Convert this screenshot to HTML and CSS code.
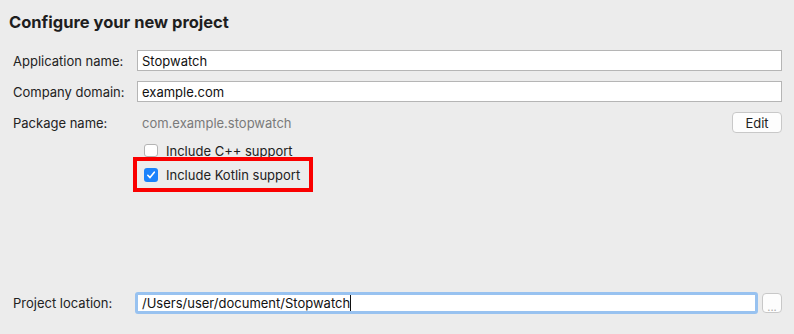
FILE: index.html
```html
<!DOCTYPE html>
<html>
<head>
    <meta name="viewport" content="width=device-width, initial-scale=1">
    <link rel="stylesheet" href="styles.css">
</head>
<body>
    <div class="wizard">
        <h1>Configure your new project</h1>
        <div class="form">
            <label class="label" for="appName">Application name:</label>
            <input type="text" id="appName" class="field" value="Stopwatch">

            <label class="label" for="domain">Company domain:</label>
            <input type="text" id="domain" class="field" value="example.com">

            <span class="label">Package name:</span>
            <div class="package">
                <span class="package-value">com.example.stopwatch</span>
                <button class="btn">Edit</button>
            </div>
        </div>

        <div class="options">
            <label class="option plain">
                <span class="check"></span>
                Include C++ support
            </label>
            <div class="highlight">
                <label class="option">
                    <span class="check checked">
                        <svg width="10" height="10" viewBox="0 0 10 10"><path d="M1.8 5.3 L4 7.6 L8.3 2.2" fill="none" stroke="#fff" stroke-width="1.6" stroke-linecap="round" stroke-linejoin="round"/></svg>
                    </span>
                    Include Kotlin support
                </label>
            </div>
        </div>

        <div class="location">
            <label class="label" for="location">Project location:</label>
            <div class="field focused"><span>/Users/user/document/Stopwatch</span><span class="caret"></span></div>
            <button class="btn small">...</button>
        </div>
    </div>
</body>
</html>
```

FILE: styles.css
```css
body {
    margin: 0;
    background-color: #ececec;
    color: #222;
    font-family: Inter, "Liberation Sans", Arial, sans-serif;
    font-size: 13px;
}

.wizard {
    height: 334px;
    box-sizing: border-box;
    display: flex;
    flex-direction: column;
    padding: 0 12px 0 13px;
}

h1 {
    margin: 12px 0 0 -4px;
    font-size: 16.5px;
    font-weight: bold;
    color: #1e1e1e;
    line-height: 20px;
}

.form {
    display: grid;
    grid-template-columns: 124px 1fr;
    row-gap: 10px;
    align-items: center;
    margin-top: 18px;
}

.label {
    color: #222;
}

.field {
    height: 21px;
    box-sizing: border-box;
    border: 1px solid #b5b5b5;
    background: white;
    padding: 0 4px;
    font-family: inherit;
    font-size: 13px;
    color: #111;
    outline: none;
    margin: 0;
}

.package {
    display: flex;
    align-items: center;
    justify-content: space-between;
    padding-left: 5px;
}

.package-value {
    color: #7a7a7a;
}

.btn {
    height: 21px;
    width: 50px;
    box-sizing: border-box;
    border: 1px solid #c8c8c8;
    border-radius: 4px;
    background: #fdfdfd;
    font-family: inherit;
    font-size: 13px;
    color: #222;
    padding: 0;
}

.options {
    display: flex;
    flex-direction: column;
    align-items: flex-start;
    margin: 11px 0 0 120px;
}

.option {
    display: flex;
    align-items: center;
    gap: 8px;
    height: 13px;
}

.option.plain {
    padding-left: 11px;
}

.check {
    width: 14px;
    height: 13px;
    box-sizing: border-box;
    border: 1px solid #b4b4b4;
    border-radius: 3px;
    background: white;
    display: flex;
    align-items: center;
    justify-content: center;
}

.check.checked {
    height: 14px;
    border: none;
    background: #1a82fb;
}

.highlight {
    width: 180px;
    height: 35px;
    box-sizing: border-box;
    border: 4px solid #fa0000;
    display: flex;
    align-items: center;
    padding-left: 7px;
}

.location {
    margin-top: auto;
    margin-bottom: 20px;
    display: flex;
    align-items: center;
}

.location .label {
    width: 122px;
}

.focused {
    flex: 1;
    height: 22px;
    display: flex;
    align-items: center;
    border: 3px solid #98c2f0;
    border-radius: 3px;
    padding-left: 4px;
}

.caret {
    width: 1px;
    height: 16px;
    background: #111;
}

.btn.small {
    width: 20px;
    height: 20px;
    margin-left: 4px;
    padding-top: 6px;
    color: #aaa;
    font-size: 11px;
    line-height: 14px;
}
```
